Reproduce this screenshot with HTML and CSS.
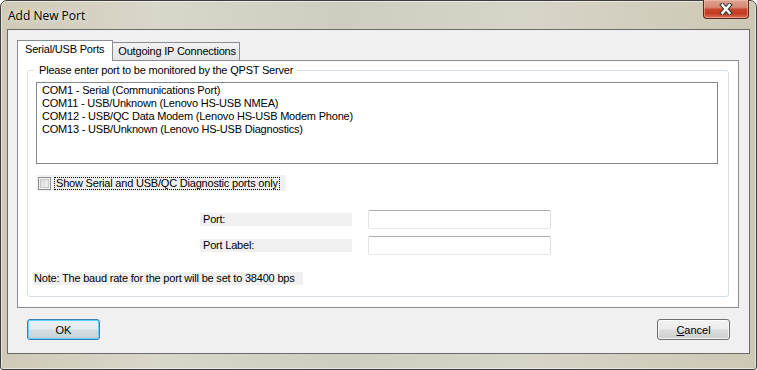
FILE: index.html
```html
<!DOCTYPE html>
<html lang="en">
<head>
    <meta charset="UTF-8">
    <title>Add New Port</title>
    <link rel="stylesheet" href="styles.css">
</head>
<body>
    <div class="window">
        <div class="titlebar">
            <span class="title">Add New Port</span>
            <button class="close" type="button">
                <svg width="14" height="12" viewBox="0 0 14 12">
                    <path d="M3.5 2 L10.5 10 M10.5 2 L3.5 10" stroke="#3a3a3a" stroke-width="4.6" stroke-linecap="square" fill="none"/>
                    <path d="M3.5 2 L10.5 10 M10.5 2 L3.5 10" stroke="#ffffff" stroke-width="2.4" stroke-linecap="square" fill="none"/>
                </svg>
            </button>
        </div>
        <div class="client">
            <div class="tabs">
                <div class="tab active">Serial/USB Ports</div>
                <div class="tab">Outgoing IP Connections</div>
            </div>
            <div class="panel">
                <fieldset class="group">
                    <legend>Please enter port to be monitored by the QPST Server</legend>
                    <div class="listbox">
                        <div>COM1 - Serial (Communications Port)</div>
                        <div>COM11 - USB/Unknown (Lenovo HS-USB NMEA)</div>
                        <div>COM12 - USB/QC Data Modem (Lenovo HS-USB Modem Phone)</div>
                        <div>COM13 - USB/Unknown (Lenovo HS-USB Diagnostics)</div>
                    </div>
                    <label class="check">
                        <span class="box"></span>
                        <span class="check-text">Show Serial and USB/QC Diagnostic ports only</span>
                    </label>
                    <div class="fields">
                        <span class="field-label">Port:</span>
                        <input class="field-input" type="text">
                        <span class="field-label">Port Label:</span>
                        <input class="field-input" type="text">
                    </div>
                    <div class="note">Note: The baud rate for the port will be set to 38400 bps</div>
                </fieldset>
            </div>
            <div class="buttons">
                <button class="btn default" type="button">OK</button>
                <button class="btn" type="button"><u>C</u>ancel</button>
            </div>
        </div>
    </div>
</body>
</html>
```

FILE: styles.css
```css
body {
    margin: 0;
    background-color: #ffffff;
}
.window {
    width: 757px;
    height: 370px;
    box-sizing: border-box;
    border: 1px solid #3e3e3e;
    border-radius: 7px 7px 3px 3px;
    padding: 0 6px 15px 6px;
    display: flex;
    flex-direction: column;
    background: linear-gradient(90deg, #cfcab6 0%, #d9d6ca 20%, #cfccc0 45%, #d7d4c8 70%, #cdc8b4 100%);
    box-shadow: inset 0 0 0 1px rgba(255, 255, 255, 0.5);
}
.titlebar {
    height: 28px;
    display: flex;
    justify-content: space-between;
    align-items: flex-start;
    flex-shrink: 0;
}
.title {
    font-family: "Open Sans", "Noto Sans", sans-serif;
    font-size: 12px;
    line-height: 16px;
    color: #000;
    padding: 7px 0 0 1px;
    text-shadow: 0 0 6px rgba(255, 255, 255, 0.9);
}
.close {
    width: 46px;
    height: 19px;
    margin: -1px 1px 0 0;
    padding: 0;
    border: 1px solid #5b2a20;
    border-top: none;
    border-radius: 0 0 4px 4px;
    background: linear-gradient(#dca091 0%, #d68b79 40%, #c8462c 52%, #c33c22 75%, #dc7257 100%);
    box-shadow: inset 0 0 0 1px rgba(255, 210, 190, 0.45);
    display: flex;
    align-items: center;
    justify-content: center;
}
.client {
    flex: 1;
    border: 1px solid #6a6a6a;
    background-color: #f0f0f0;
    padding: 10px 10px 0 9px;
    font-family: "Liberation Sans", Arial, sans-serif;
    font-size: 11px;
    line-height: 13px;
    letter-spacing: -0.2px;
    color: #000;
}
.tabs {
    display: flex;
    align-items: flex-end;
    height: 20px;
}
.tab {
    box-sizing: border-box;
    height: 18px;
    border: 1px solid #898c95;
    border-bottom: none;
    border-left: none;
    padding: 2px 3px 0 5px;
    background: linear-gradient(#f2f2f2, #e4e4e4);
    white-space: nowrap;
}
.tab.active {
    position: relative;
    z-index: 1;
    height: 21px;
    margin-bottom: -1px;
    border-left: 1px solid #898c95;
    padding: 2px 8px 0 7px;
    background: #ffffff;
}
.panel {
    border: 1px solid #898c95;
    background-color: #ffffff;
    padding: 3px 9px 10px 9px;
}
.group {
    margin: 0;
    min-width: 0;
    border: 1px solid #d5dfe5;
    border-radius: 3px;
    padding: 5px 10px 11px 8px;
}
.group legend {
    padding: 0 3px 0 5px;
    margin-left: -2px;
    line-height: 13px;
}
.listbox {
    box-sizing: border-box;
    height: 82px;
    border: 1px solid #828790;
    background-color: #ffffff;
    padding: 1px 5px;
}
.check {
    display: flex;
    align-items: center;
    width: 249px;
    height: 16px;
    margin: 11px 0 0 1px;
    background-color: #f0f0f0;
    white-space: nowrap;
}
.box {
    box-sizing: border-box;
    flex-shrink: 0;
    width: 13px;
    height: 13px;
    margin-left: 1px;
    border: 1px solid #8e8f8f;
    background: linear-gradient(135deg, #d3d3d3, #f7f7f7);
    box-shadow: inset 0 0 0 1px #f4f4f4, inset 0 0 0 2px #c9c9c9;
}
.check-text {
    margin-left: 3px;
    padding: 0 1px;
    border: 1px dotted #000;
    line-height: 11px;
}
.fields {
    display: grid;
    grid-template-columns: 152px 183px;
    column-gap: 16px;
    row-gap: 7px;
    align-items: center;
    margin-top: 19px;
    padding-left: 164px;
}
.field-label {
    height: 13px;
    padding-left: 3px;
    background-color: #f0f0f0;
}
.field-input {
    box-sizing: border-box;
    height: 19px;
    margin: 0;
    border: 1px solid;
    border-color: #abadb3 #dbdfe6 #e3e9ef #e2e3ea;
    border-radius: 2px;
    background-color: #ffffff;
}
.note {
    width: 269px;
    margin: 17px 0 0 -3px;
    padding-left: 1px;
    background-color: #f0f0f0;
    white-space: nowrap;
}
.buttons {
    display: flex;
    justify-content: space-between;
    margin-top: 11px;
    padding: 0 9px 0 10px;
}
.btn {
    box-sizing: border-box;
    width: 73px;
    height: 21px;
    padding: 0;
    border: 1px solid #707070;
    border-radius: 3px;
    background: linear-gradient(#f2f2f2 0%, #ebebeb 48%, #dddddd 52%, #cfcfcf 100%);
    box-shadow: inset 0 0 0 1px rgba(255, 255, 255, 0.7);
    font-family: "Liberation Sans", Arial, sans-serif;
    font-size: 11px;
    color: #000;
}
.btn.default {
    border-color: #3c7fb1;
    background: linear-gradient(#eaf2f5 0%, #e3ebee 48%, #d4dde1 52%, #c8d1d5 100%);
    box-shadow: inset 0 0 0 1px #5fd3fb;
}
```
